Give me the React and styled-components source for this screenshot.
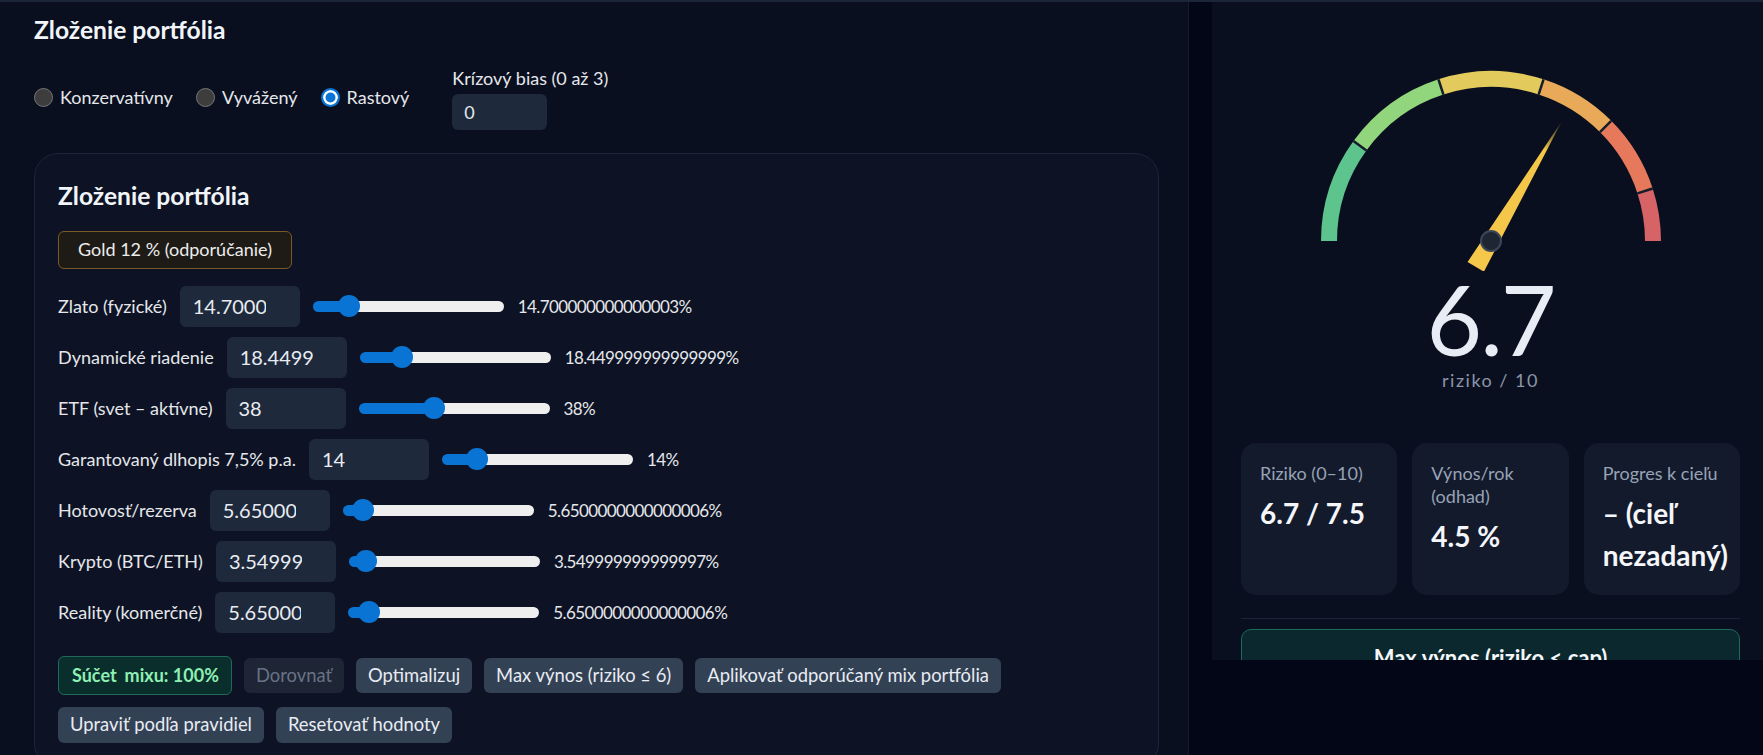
import React from "react";
import styled, { createGlobalStyle } from "styled-components";

const GlobalStyle = createGlobalStyle`
  html, body { margin: 0; padding: 0; background: #020617; overflow: hidden; }
  body { font-family: Lato, "Noto Sans", sans-serif; color: #e5e7eb; }
  *, *::before, *::after { box-sizing: border-box; }
`;

const Page = styled.div`
  width: 1763px;
  height: 755px;
  overflow: hidden;
  border-top: 2px solid #1c2639;
  display: grid;
  grid-template-columns: 1189px 551px;
  column-gap: 23px;
  align-items: start;
`;

const LeftPanel = styled.section`
  height: 753px;
  overflow: hidden;
  background: #0a0f1f;
  border-right: 1px solid #141b2c;
  padding: 14px 29px 0 34px;
`;

const Title = styled.h2`
  margin: 0;
  font-size: 24.6px;
  line-height: 28.8px;
  font-weight: 700;
  color: #f1f5f9;
`;

const ControlsRow = styled.div`
  margin-top: 22px;
  display: flex;
  align-items: center;
  gap: 23px;
`;

const RadioLabel = styled.label`
  display: flex;
  align-items: center;
  gap: 7px;
  font-size: 18px;
  line-height: 1.3;
  color: #e5e7eb;
  margin-bottom: 2px;
`;

const RadioDot = styled.input.attrs({ type: "radio" })`
  appearance: none;
  -webkit-appearance: none;
  margin: 0;
  width: 19px;
  height: 19px;
  flex: none;
  border-radius: 50%;
  background: #3d3d3d;
  border: 1px solid #767676;
  &:checked {
    background: #0a74d4;
    border: 2px solid #0a74d4;
    box-shadow: inset 0 0 0 2.5px #ffffff;
  }
`;

const BiasGroup = styled.div`
  margin-left: 20px;
  display: flex;
  flex-direction: column;
  gap: 4px;
`;

const FieldLabel = styled.span`
  font-size: 18px;
  line-height: 1.3;
  color: #e5e7eb;
`;

const BiasInput = styled.input`
  width: 95px;
  height: 36px;
  border: none;
  outline: none;
  border-radius: 6px;
  background: #1e293b;
  color: #e5e7eb;
  font-family: inherit;
  font-size: 18px;
  padding: 0 12px;
`;

const Card = styled.div`
  margin-top: 23px;
  background: #0d1324;
  border: 1px solid #1c2437;
  border-radius: 24px;
  padding: 28px 23px 24px;
  display: flex;
  flex-direction: column;
  align-items: flex-start;
`;

const Chip = styled.div`
  margin-top: 20px;
  padding: 6.5px 19px;
  border: 1px solid #7a5a24;
  background: #1e1b17;
  border-radius: 6px;
  font-size: 18px;
  line-height: 1.3;
  color: #ececec;
`;

const Rows = styled.div`
  margin-top: 16.6px;
  display: flex;
  flex-direction: column;
  gap: 10px;
`;

const Row = styled.div`
  display: flex;
  align-items: center;
  gap: 13px;
  height: 41px;
`;

const RowLabel = styled.span`
  font-size: 18px;
  color: #e5e7eb;
  white-space: nowrap;
`;

const NumInput = styled.input`
  flex: none;
  width: 120px;
  height: 41px;
  border: none;
  outline: none;
  border-radius: 6px;
  background: #1e293b;
  color: #e8ecf2;
  font-family: inherit;
  font-size: 20px;
  padding: 0 34px 0 13px;
`;

const Range = styled.input.attrs({ type: "range" })`
  -webkit-appearance: none;
  appearance: none;
  flex: none;
  width: 191px;
  height: 22px;
  margin: 0;
  background: transparent;
  &::-webkit-slider-runnable-track {
    height: 11px;
    border-radius: 6px;
    background: linear-gradient(
      to right,
      #0a74d4 0,
      #0a74d4 var(--fill),
      #efefef var(--fill),
      #efefef 100%
    );
  }
  &::-webkit-slider-thumb {
    -webkit-appearance: none;
    width: 22px;
    height: 22px;
    margin-top: -5.5px;
    border-radius: 50%;
    background: #0a74d4;
    border: none;
  }
`;

const ValueText = styled.span`
  font-size: 17px;
  letter-spacing: -0.6px;
  color: #e5e7eb;
  white-space: nowrap;
  margin-left: 1px;
`;

const Actions = styled.div`
  margin-top: 23px;
  display: flex;
  flex-wrap: wrap;
  align-items: center;
  gap: 12px 12px;
`;

const SumBadge = styled.div`
  padding: 7px 12px 7px 13px;
  border: 1px solid #1d6b58;
  background: #0a2e2b;
  border-radius: 6px;
  font-size: 18px;
  line-height: 1.3;
  font-weight: 700;
  color: #8ef0b4;
`;

const SumWord = styled.span`
  margin-right: 8px;
`;

const Button = styled.button`
  font-family: inherit;
  font-size: 18.4px;
  line-height: 23.4px;
  padding: 6px 12px;
  border: none;
  border-radius: 6px;
  background: ${(p) => (p.disabled ? "#1e2534" : "#334155")};
  color: ${(p) => (p.disabled ? "#687287" : "#e8ecf2")};
`;

const RightPanel = styled.aside`
  height: 658px;
  overflow: hidden;
  background: #0a0f1f;
  padding: 39px 23px 0 29px;
`;

const GaugeSvg = styled.svg`
  display: block;
  margin: 0 auto;
`;

const BigNumber = styled.div`
  text-align: center;
  font-size: 96px;
  line-height: 96px;
  letter-spacing: -2px;
  color: #e8ecf4;
`;

const GaugeCaption = styled.div`
  margin-top: 1px;
  text-align: center;
  font-size: 18px;
  line-height: 1.4;
  letter-spacing: 1.5px;
  color: #8c96a8;
`;

const StatGrid = styled.div`
  margin-top: 49.5px;
  display: grid;
  grid-template-columns: repeat(3, 1fr);
  gap: 15px;
`;

const StatCard = styled.div`
  background: #131a2b;
  border-radius: 15px;
  padding: 19px;
  min-width: 0;
`;

const StatLabel = styled.div`
  font-size: 18px;
  line-height: 1.3;
  color: #97a3b6;
`;

const StatValue = styled.div`
  margin-top: 7px;
  font-size: 28px;
  line-height: 1.5;
  font-weight: 700;
  color: #f4f6fa;
`;

const Divider = styled.div`
  margin-top: 23px;
  height: 1px;
  background: #1b2436;
`;

const MaxButton = styled.button`
  display: block;
  width: 100%;
  margin-top: 10px;
  font-family: inherit;
  font-size: 22px;
  line-height: 1.3;
  font-weight: 700;
  padding: 14px;
  border: 1px solid #1c6b5a;
  border-radius: 10px;
  background: #0a282d;
  color: #f4f6fa;
  text-align: center;
`;

const CX = 180;
const CY = 200;
const R = 162;

const pt = (v, r) => {
  const a = Math.PI - (v * Math.PI) / 10;
  return [CX + r * Math.cos(a), CY - r * Math.sin(a)];
};

const arcPath = (a, b) => {
  const [x1, y1] = pt(a, R);
  const [x2, y2] = pt(b, R);
  return `M ${x1} ${y1} A ${R} ${R} 0 0 1 ${x2} ${y2}`;
};

const segments = [
  [0, 2, "#5dc48e"],
  [2, 4, "#91d57c"],
  [4, 6, "#e3ca5c"],
  [6, 7.5, "#e8aa58"],
  [7.5, 9, "#e6795c"],
  [9, 10, "#d66466"],
];

function Gauge({ value }) {
  const a = Math.PI - (value * Math.PI) / 10;
  const ux = Math.cos(a);
  const uy = -Math.sin(a);
  const nx = -uy;
  const ny = ux;
  const tipX = CX + ux * 140;
  const tipY = CY + uy * 140;
  const tX = CX - ux * 30;
  const tY = CY - uy * 30;
  const pts = `${tX + nx * 9.5},${tY + ny * 9.5} ${tX - nx * 9.5},${tY - ny * 9.5} ${tipX},${tipY}`;
  return (
    <GaugeSvg width="360" height="230" viewBox="0 0 360 230">
      <defs>
        <linearGradient id="needleGrad" gradientUnits="userSpaceOnUse" x1={tX} y1={tY} x2={tipX} y2={tipY}>
          <stop offset="0" stopColor="#f5c84b" />
          <stop offset="0.8" stopColor="#f3c548" />
          <stop offset="1" stopColor="#f3c548" stopOpacity="0.05" />
        </linearGradient>
      </defs>
      {segments.map(([s, e, c]) => (
        <path key={s} d={arcPath(s, e)} stroke={c} strokeWidth="16" fill="none" />
      ))}
      {[2, 4, 6, 7.5, 9].map((v) => {
        const [x1, y1] = pt(v, 154);
        const [x2, y2] = pt(v, 170);
        return <line key={v} x1={x1} y1={y1} x2={x2} y2={y2} stroke="#151c2b" strokeWidth="2.5" />;
      })}
      <polygon points={pts} fill="url(#needleGrad)" />
      <circle cx={CX} cy={CY} r="10" fill="#1f2633" stroke="#3b4658" strokeWidth="2" />
    </GaugeSvg>
  );
}

const rows = [
  ["Zlato (fyzické)", "14.700000000000003", 14.7],
  ["Dynamické riadenie", "18.449999999999999", 18.45],
  ["ETF (svet – aktívne)", "38", 38],
  ["Garantovaný dlhopis 7,5% p.a.", "14", 14],
  ["Hotovosť/rezerva", "5.6500000000000006", 5.65],
  ["Krypto (BTC/ETH)", "3.549999999999997", 3.55],
  ["Reality (komerčné)", "5.6500000000000006", 5.65],
];

function SliderRow({ label, text, value }) {
  const fill = 11 + (value / 100) * 169;
  return (
    <Row>
      <RowLabel>{label}</RowLabel>
      <NumInput type="text" defaultValue={text} />
      <Range min="0" max="100" step="any" defaultValue={value} style={{ "--fill": `${fill}px` }} />
      <ValueText>{text}%</ValueText>
    </Row>
  );
}

export default function App() {
  return (
    <>
      <GlobalStyle />
      <Page>
        <LeftPanel>
          <Title>Zloženie portfólia</Title>
          <ControlsRow>
            <RadioLabel>
              <RadioDot name="profile" />
              Konzervatívny
            </RadioLabel>
            <RadioLabel>
              <RadioDot name="profile" />
              Vyvážený
            </RadioLabel>
            <RadioLabel>
              <RadioDot name="profile" defaultChecked />
              Rastový
            </RadioLabel>
            <BiasGroup>
              <FieldLabel>Krízový bias (0 až 3)</FieldLabel>
              <BiasInput type="text" defaultValue="0" />
            </BiasGroup>
          </ControlsRow>
          <Card>
            <Title>Zloženie portfólia</Title>
            <Chip>Gold 12 % (odporúčanie)</Chip>
            <Rows>
              {rows.map(([l, t, v]) => (
                <SliderRow key={l} label={l} text={t} value={v} />
              ))}
            </Rows>
            <Actions>
              <SumBadge>
                <SumWord>Súčet</SumWord>mixu: 100%
              </SumBadge>
              <Button disabled>Dorovnať</Button>
              <Button>Optimalizuj</Button>
              <Button>Max výnos (riziko ≤ 6)</Button>
              <Button>Aplikovať odporúčaný mix portfólia</Button>
              <Button>Upraviť podľa pravidiel</Button>
              <Button>Resetovať hodnoty</Button>
            </Actions>
          </Card>
        </LeftPanel>
        <RightPanel>
          <Gauge value={6.7} />
          <BigNumber>6.7</BigNumber>
          <GaugeCaption>riziko / 10</GaugeCaption>
          <StatGrid>
            <StatCard>
              <StatLabel>Riziko (0–10)</StatLabel>
              <StatValue>6.7 / 7.5</StatValue>
            </StatCard>
            <StatCard>
              <StatLabel>Výnos/rok (odhad)</StatLabel>
              <StatValue>4.5 %</StatValue>
            </StatCard>
            <StatCard>
              <StatLabel>Progres k cieľu</StatLabel>
              <StatValue>– (cieľ nezadaný)</StatValue>
            </StatCard>
          </StatGrid>
          <Divider />
          <MaxButton>Max výnos (riziko &lt; cap)</MaxButton>
        </RightPanel>
      </Page>
    </>
  );
}
